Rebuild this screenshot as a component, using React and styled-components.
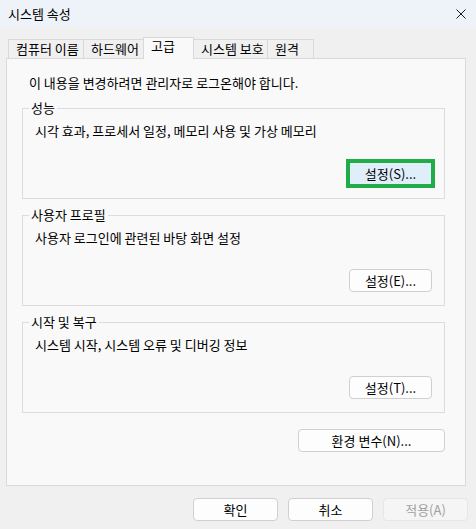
import React from 'react';
import styled, { createGlobalStyle } from 'styled-components';

const GlobalStyle = createGlobalStyle`
  body {
    margin: 0;
    background: #f0f0f0;
    font-family: 'Noto Sans CJK KR', 'Noto Sans', sans-serif;
    font-size: 13px;
    color: #000000;
  }
`;

const Window = styled.div`
  width: 476px;
  height: 529px;
  background: #f0f0f0;
  display: flex;
  flex-direction: column;
  box-sizing: border-box;
`;

const TitleBar = styled.div`
  height: 27px;
  background: #eef2f9;
  display: flex;
  align-items: center;
  justify-content: space-between;
  padding: 0 10px 0 8px;
  flex-shrink: 0;
`;

const Title = styled.span`
  font-size: 13px;
  line-height: 16px;
`;

const CloseIcon = styled.svg`
  width: 10px;
  height: 10px;
  stroke: #1a1a1a;
  stroke-width: 1;
`;

const Body = styled.div`
  padding: 10px 10px 0 6px;
`;

const TabStrip = styled.div`
  display: flex;
  align-items: flex-end;
  height: 21px;
  padding-left: 2px;
`;

const Tab = styled.div`
  box-sizing: border-box;
  width: ${(p) => p.$w}px;
  height: ${(p) => (p.$active ? 22 : 19)}px;
  margin-bottom: ${(p) => (p.$active ? -1 : 0)}px;
  margin-left: -1px;
  padding-left: 7px;
  border: 1px solid #d9d9d9;
  border-bottom: none;
  background: ${(p) => (p.$active ? '#f9f9f9' : '#f0f0f0')};
  line-height: ${(p) => (p.$active ? 16 : 17)}px;
  white-space: nowrap;
  position: ${(p) => (p.$active ? 'relative' : 'static')};
  z-index: ${(p) => (p.$active ? 1 : 'auto')};
  &:first-child {
    margin-left: 0;
  }
`;

const Panel = styled.div`
  box-sizing: border-box;
  width: 460px;
  height: 428px;
  border: 1px solid #d9d9d9;
  background: #f9f9f9;
  padding: 16px 20px 0 15px;
  display: flex;
  flex-direction: column;
`;

const Note = styled.div`
  margin: 0 0 9px 7px;
  line-height: 16px;
`;

const Group = styled.fieldset`
  margin: 0 0 8px;
  padding: 7px 12px 13px;
  border: 1px solid #dcdcdc;
  min-width: 0;
`;

const Legend = styled.legend`
  padding: 0 2px;
  margin-left: -6px;
  line-height: 16px;
  font-size: 13px;
`;

const GroupText = styled.div`
  line-height: 16px;
`;

const ButtonRow = styled.div`
  display: flex;
  justify-content: flex-end;
  margin-top: ${(p) => p.$gap || 0}px;
`;

const Button = styled.button`
  box-sizing: border-box;
  width: ${(p) => p.$w || 83}px;
  height: 23px;
  padding: 0;
  border-radius: ${(p) => (p.$focus ? 0 : 4)}px;
  font-family: inherit;
  font-size: 13px;
  line-height: 16px;
  color: ${(p) => (p.disabled ? '#a0a0a0' : '#000000')};
  background: ${(p) => (p.$focus ? '#e0eef9' : p.disabled ? '#f5f5f5' : '#fdfdfd')};
  border: 1px solid ${(p) => (p.$focus ? '#22ac48' : p.disabled ? '#e6e6e6' : '#d0d0d0')};
  outline: ${(p) => (p.$focus ? '3px solid #22ac48' : 'none')};
`;

const Footer = styled.div`
  display: flex;
  justify-content: flex-end;
  gap: 10px;
  padding: 12px 8px 0 0;
`;

const tabs = [
  { label: '컴퓨터 이름', w: 76 },
  { label: '하드웨어', w: 61 },
  { label: '고급', w: 51, active: true },
  { label: '시스템 보호', w: 75 },
  { label: '원격', w: 47 },
];

const groups = [
  { title: '성능', text: '시각 효과, 프로세서 일정, 메모리 사용 및 가상 메모리', button: '설정(S)...', focus: true },
  { title: '사용자 프로필', text: '사용자 로그인에 관련된 바탕 화면 설정', button: '설정(E)...' },
  { title: '시작 및 복구', text: '시스템 시작, 시스템 오류 및 디버깅 정보', button: '설정(T)...' },
];

export default function App() {
  return (
    <>
      <GlobalStyle />
      <Window>
        <TitleBar>
          <Title>시스템 속성</Title>
          <CloseIcon viewBox="0 0 10 10">
            <line x1="0.5" y1="0.5" x2="9.5" y2="9.5" />
            <line x1="9.5" y1="0.5" x2="0.5" y2="9.5" />
          </CloseIcon>
        </TitleBar>
        <Body>
          <TabStrip>
            {tabs.map((t) => (
              <Tab key={t.label} $w={t.w} $active={t.active}>
                {t.label}
              </Tab>
            ))}
          </TabStrip>
          <Panel>
            <Note>이 내용을 변경하려면 관리자로 로그온해야 합니다.</Note>
            {groups.map((g) => (
              <Group key={g.title}>
                <Legend>{g.title}</Legend>
                <GroupText>{g.text}</GroupText>
                <ButtonRow $gap={23}>
                  <Button $focus={g.focus}>{g.button}</Button>
                </ButtonRow>
              </Group>
            ))}
            <ButtonRow $gap={8}>
              <Button $w={147}>환경 변수(N)...</Button>
            </ButtonRow>
          </Panel>
        </Body>
        <Footer>
          <Button $w={85}>확인</Button>
          <Button $w={85}>취소</Button>
          <Button $w={85} disabled>
            적용(A)
          </Button>
        </Footer>
      </Window>
    </>
  );
}
